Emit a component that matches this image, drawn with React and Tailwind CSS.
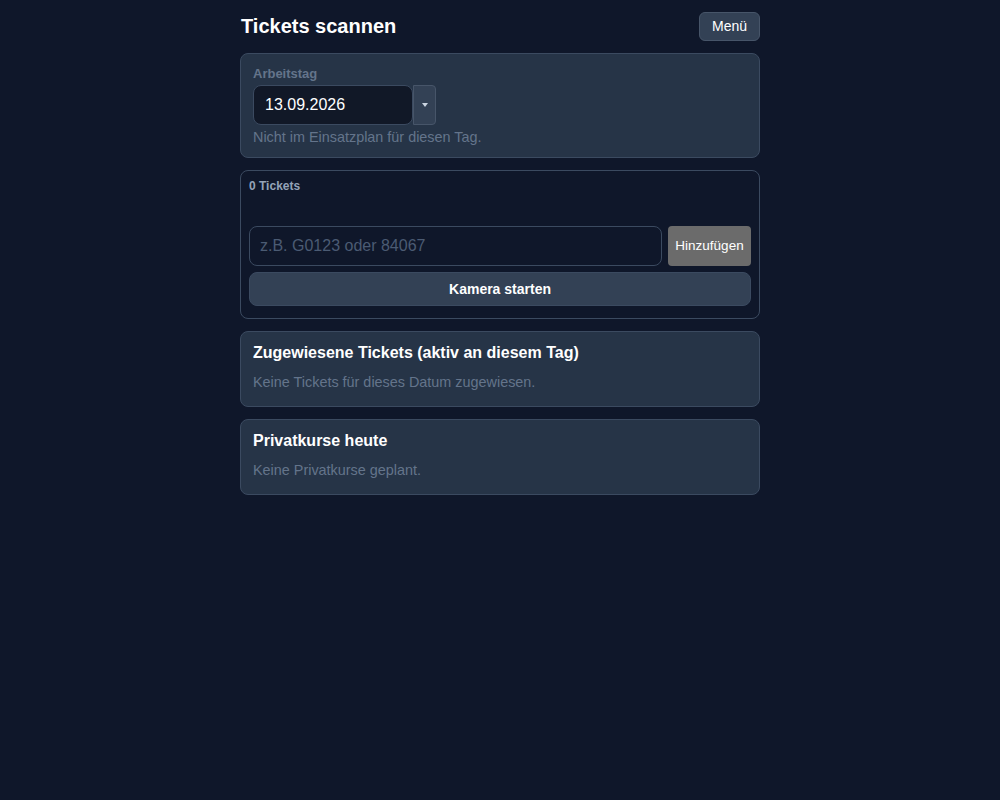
export default function App() {
  return (
    <div className="min-h-screen bg-[#0f172a] font-['Liberation_Sans',Arial,sans-serif] text-white">
      <div className="mx-auto w-[520px] pt-3">
        {/* Header */}
        <div className="flex items-center justify-between">
          <h1 className="pl-px text-[20px] font-bold leading-[29px]">Tickets scannen</h1>
          <button className="h-[29px] rounded-md border border-[#475569] bg-[#334155] px-3 text-[14px] text-white">
            Menü
          </button>
        </div>

        {/* Arbeitstag */}
        <div className="mt-3 rounded-lg border border-[#3b4a60] bg-[#263447] px-3 pb-3 pt-3">
          <div className="text-[13px] font-bold leading-[16px] text-[#64748b]">Arbeitstag</div>
          <div className="mt-[3px] flex">
            <div className="flex h-[40px] w-[160px] items-center rounded-lg border border-[#3b4a60] bg-[#111827] px-[11px] text-[16px]">
              13.09.2026
            </div>
            <button className="flex h-[40px] w-[23px] items-center justify-center rounded-r border border-[#475569] bg-[#334155]">
              <svg width="6" height="4" viewBox="0 0 6 4">
                <path d="M0 0h6L3 4z" fill="#cbd5e1" />
              </svg>
            </button>
          </div>
          <p className="mt-[4px] text-[14.4px] leading-[16px] text-[#64748b]">Nicht im Einsatzplan für diesen Tag.</p>
        </div>

        {/* Scan */}
        <div className="mt-3 rounded-lg border border-[#3b4a60] px-2 pb-3 pt-2">
          <div className="text-[12px] font-bold leading-[14px] text-[#94a3b8]">0 Tickets</div>
          <div className="mt-[33px] flex gap-[6px]">
            <input
              className="h-[40px] flex-1 rounded-lg border border-[#3b4a60] bg-[#0f172a] px-[10px] text-[16px] text-white outline-none placeholder:text-[#4b5b73]"
              placeholder="z.B. G0123 oder 84067"
            />
            <button className="h-[40px] w-[83px] rounded bg-[#6b6b6b] text-[13.5px] font-normal text-white">
              Hinzufügen
            </button>
          </div>
          <button className="mt-[6px] h-[34px] w-full rounded-lg border border-[#3b4a60] bg-[#334155] text-[14px] font-bold text-white">
            Kamera starten
          </button>
        </div>

        {/* Zugewiesene Tickets */}
        <div className="mt-3 rounded-lg border border-[#3b4a60] bg-[#263447] px-3 pb-[16px] pt-[11px]">
          <h2 className="text-[16px] font-bold leading-[20px]">Zugewiesene Tickets (aktiv an diesem Tag)</h2>
          <p className="mt-[11px] text-[14.4px] leading-[16px] text-[#64748b]">Keine Tickets für dieses Datum zugewiesen.</p>
        </div>

        {/* Privatkurse */}
        <div className="mt-3 rounded-lg border border-[#3b4a60] bg-[#263447] px-3 pb-[16px] pt-[11px]">
          <h2 className="text-[16px] font-bold leading-[20px]">Privatkurse heute</h2>
          <p className="mt-[11px] text-[14.4px] leading-[16px] text-[#64748b]">Keine Privatkurse geplant.</p>
        </div>
      </div>
    </div>
  );
}
